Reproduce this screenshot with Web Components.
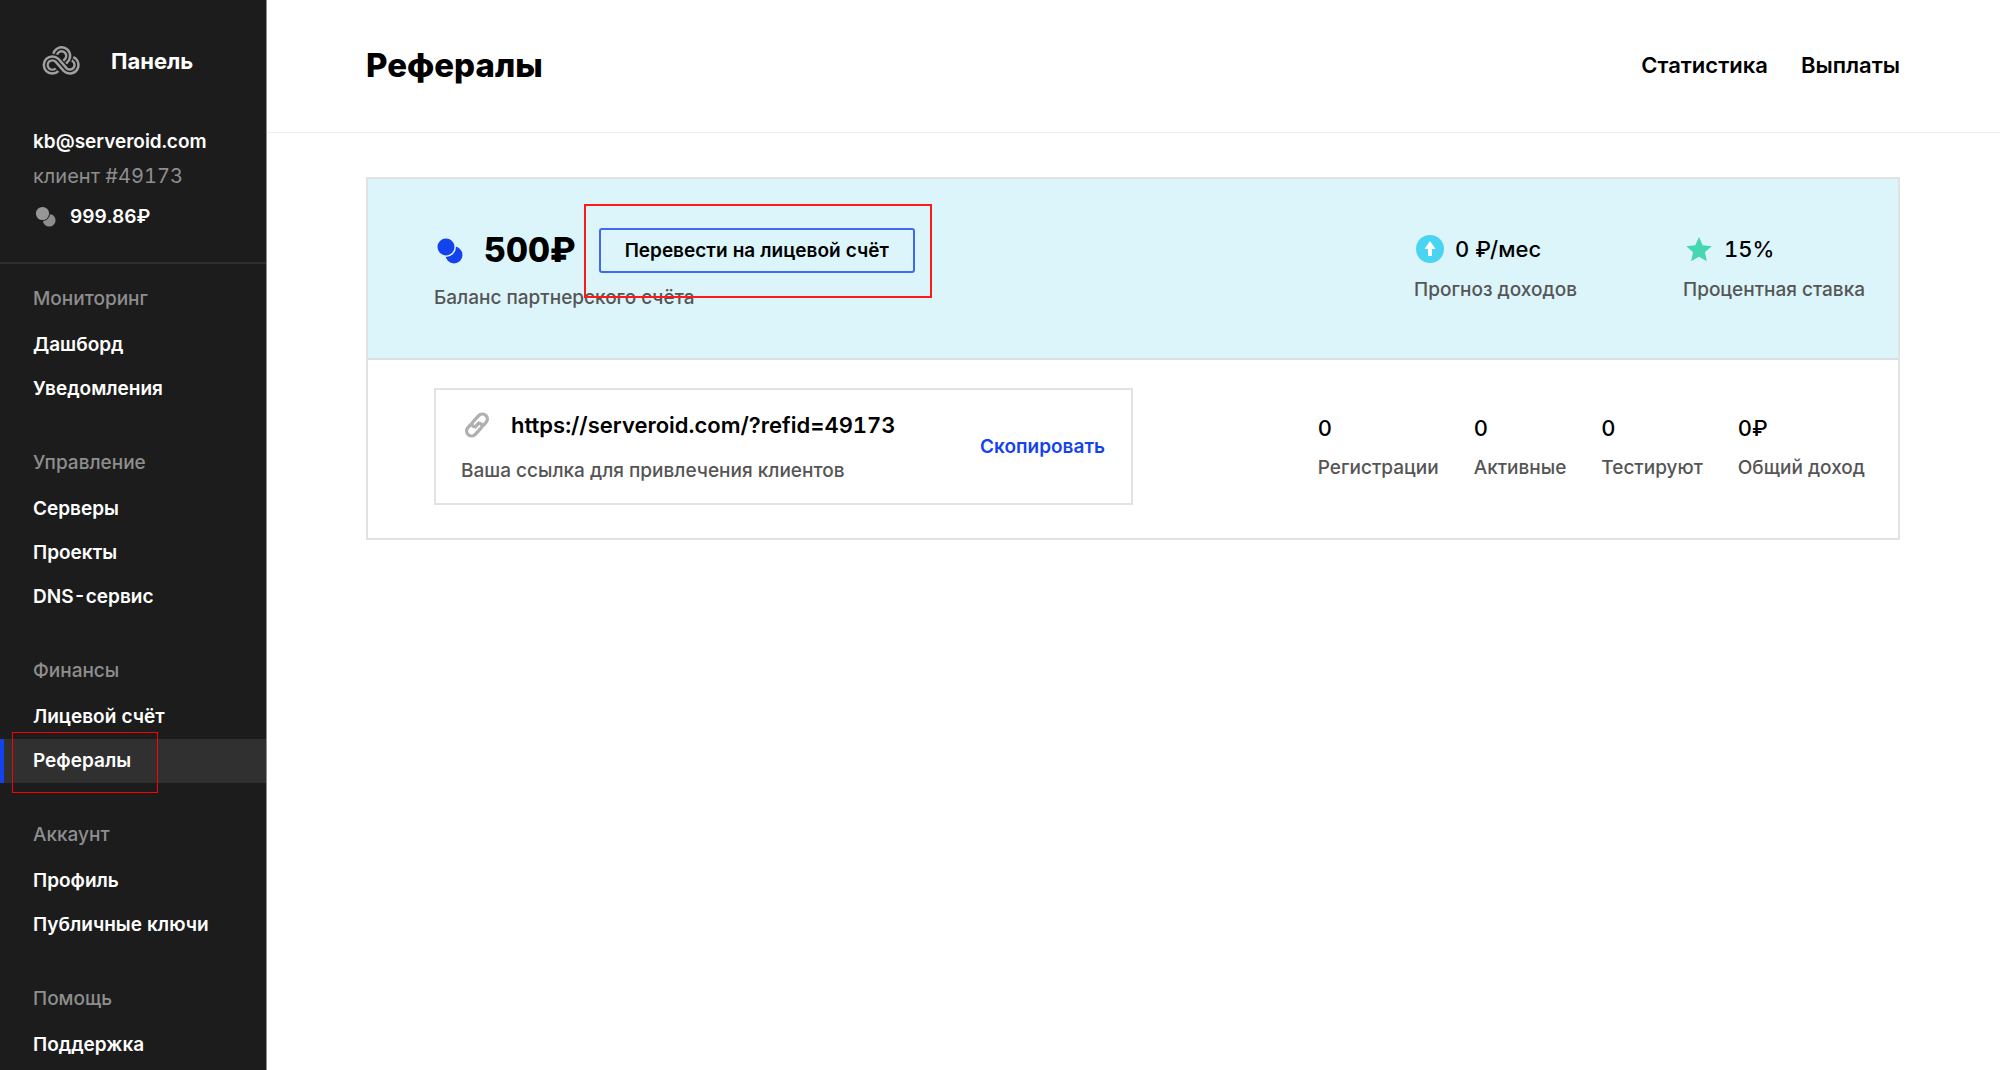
<!DOCTYPE html>
<html lang="ru">
<head>
<meta charset="utf-8">
<title>Рефералы</title>
<style>
html, body { margin: 0; height: 100%; }
body { font-family: Inter, sans-serif; font-size: 19px; line-height: 28px; color: #000; background: #fff; font-variant-numeric: tabular-nums; }
</style>
</head>
<body>
<panel-app></panel-app>

<template id="t-app">
<style>
:host { display: flex; height: 100vh; overflow: hidden; }
main { flex: 1; min-width: 0; }
.content { padding: 44px 100px 44px 99px; }
</style>
<side-bar></side-bar>
<main>
  <page-header heading="Рефералы">
    <header-link>Статистика</header-link>
    <header-link>Выплаты</header-link>
  </page-header>
  <div class="content"><referral-card></referral-card></div>
</main>
</template>

<template id="t-sidebar">
<style>
:host { display: block; flex: none; width: 266px; background: #1c1c1c; color: #fff; border-right: 1px solid #8e8e8e; }
.brand { display: flex; align-items: center; gap: 31px; padding: 46px 33px 0 42px; height: 29px; font-size: 22px; font-weight: 700; }
.brand svg { width: 38px; height: 30px; display: block; }
.user { padding: 50px 33px 28px; border-bottom: 2px solid #2f2f2f; font-weight: 600; }
.user p { margin: 0; line-height: 34px; }
.user .id { color: #8e8e8e; font-size: 20px; font-weight: 400; }
.user .money { display: flex; align-items: center; gap: 13px; padding-top: 7px; }
.money svg { width: 22px; height: 22px; margin-left: 2px; }
nav { padding-top: 13px; display: flex; flex-direction: column; gap: 30px; }
</style>
<div class="brand">
  <svg viewBox="0 0 38 30" fill="none">
    <path d="M13.200 8.200A6.600 6.600 0 1 1 25.400 13L22.500 16.500" stroke="#a0a0a0" stroke-width="6.400"/>
    <path d="M13.200 8.200A6.600 6.600 0 1 1 25.400 13L22.500 16.500" stroke="#1c1c1c" stroke-width="1.500"/>
    <path d="M15 14.300L23.300 23.700A6.600 6.600 0 0 0 28 25.600" stroke="#1c1c1c" stroke-width="8.800"/>
    <path d="M15 23.700A6.600 6.600 0 1 1 15 14.300L23.300 23.700A6.600 6.600 0 1 0 30.500 12.900" stroke="#a0a0a0" stroke-width="6.400"/>
    <path d="M15 23.700A6.600 6.600 0 1 1 15 14.300L23.300 23.700A6.600 6.600 0 1 0 30.500 12.900" stroke="#1c1c1c" stroke-width="1.500"/>
  </svg>
  <span>Панель</span>
</div>
<div class="user">
  <p>kb@serveroid.com</p>
  <p class="id">клиент #49173</p>
  <p class="money"><svg viewBox="0 0 22 22"><circle cx="14.200" cy="14.200" r="6.300" fill="#8e8e8e"/><circle cx="7.500" cy="7.500" r="7.600" fill="#1c1c1c"/><circle cx="7.500" cy="7.500" r="6.600" fill="#969696"/></svg><span>999.86₽</span></p>
</div>
<nav>
  <nav-group label="Мониторинг"><nav-item>Дашборд</nav-item><nav-item>Уведомления</nav-item></nav-group>
  <nav-group label="Управление"><nav-item>Серверы</nav-item><nav-item>Проекты</nav-item><nav-item>DNS-сервис</nav-item></nav-group>
  <nav-group label="Финансы"><nav-item>Лицевой счёт</nav-item><nav-item active>Рефералы</nav-item></nav-group>
  <nav-group label="Аккаунт"><nav-item>Профиль</nav-item><nav-item>Публичные ключи</nav-item></nav-group>
  <nav-group label="Помощь"><nav-item>Поддержка</nav-item></nav-group>
</nav>
</template>

<template id="t-group">
<style>
:host { display: block; }
.label { padding: 0 33px 2px; line-height: 44px; color: #8e8e8e; font-weight: 500; }
</style>
<div class="label"></div>
<slot></slot>
</template>

<template id="t-item">
<style>
:host { display: block; position: relative; }
a { display: block; padding: 0 33px; line-height: 44px; color: #fff; text-decoration: none; font-weight: 600; }
:host([active]) a { background: #303030; padding-left: 29px; border-left: 4px solid #1443ee; }
.mark { display: none; }
:host([active]) .mark { display: block; position: absolute; left: 12px; top: -7px; width: 144px; height: 59px; border: 1px solid #f00; pointer-events: none; }
</style>
<a href="#"><slot></slot></a>
<div class="mark"></div>
</template>

<template id="t-header">
<style>
:host { display: flex; align-items: center; justify-content: space-between; height: 133px; box-sizing: border-box; padding: 0 100px 0 99px; border-bottom: 1px solid #eee; }
h1 { margin: 0; padding-bottom: 2px; font-size: 33px; line-height: 44px; font-weight: 800; }
nav { display: flex; gap: 33px; }
</style>
<h1></h1>
<nav><slot></slot></nav>
</template>

<template id="t-hlink">
<style>
:host { display: block; }
a { color: #000; text-decoration: none; font-size: 22px; line-height: 28px; font-weight: 600; }
</style>
<a href="#"><slot></slot></a>
</template>

<template id="t-card">
<style>
:host { display: block; border: 2px solid #e2e2e2; }
.top, .bottom { display: flex; justify-content: space-between; padding: 0 33px 0 66px; }
.top { background: #dcf5fb; border-bottom: 2px solid #dcdfe0; height: 179px; align-items: flex-start; }
.balance { padding-top: 48px; }
.row { display: flex; align-items: center; height: 46px; }
.row svg { width: 30px; height: 30px; margin-right: 20px; }
.sum { font-size: 34px; font-weight: 800; margin-right: 23px; }
.action { position: relative; }
button { font: inherit; cursor: pointer; }
.transfer { display: block; box-sizing: border-box; height: 45px; padding: 1px 24px 0; background: transparent; border: 2px solid #4068f0; border-radius: 3px; color: #000; font-weight: 600; }
.mark { position: absolute; left: -15px; top: -24px; right: -17px; bottom: -25px; border: 2px solid #ff1a1a; pointer-events: none; }
.caption { color: #555; padding-top: 11px; font-weight: 500; }
.rates { display: flex; gap: 106px; padding-top: 55px; }
.bottom { align-items: flex-start; padding-top: 28px; padding-bottom: 33px; }
.stats { display: flex; gap: 35px; padding-top: 26px; }
.ref { display: flex; align-items: center; justify-content: space-between; box-sizing: border-box; flex: 0 0 699px; height: 117px; padding: 0 26px 0 25px; border: 2px solid #e2e2e2; }
.url { display: flex; align-items: center; gap: 18px; font-size: 22px; line-height: 28px; font-weight: 600; }
.url svg { width: 32px; height: 32px; }
.ref .caption { padding-top: 16px; }
.copy { border: 0; background: none; padding: 0; color: #1443ee; font-weight: 600; }
</style>
<div class="top">
  <div class="balance">
    <div class="row">
      <svg viewBox="0 0 30 30"><circle cx="20" cy="20" r="8.500" fill="#1443ee"/><circle cx="12" cy="12" r="10" fill="#dcf5fb"/><circle cx="12" cy="12" r="8.500" fill="#1443ee"/></svg>
      <span class="sum">500₽</span>
      <div class="action"><button class="transfer" type="button">Перевести на лицевой счёт</button><div class="mark"></div></div>
    </div>
    <div class="caption">Баланс партнерского счёта</div>
  </div>
  <div class="rates">
    <stat-item label="Прогноз доходов" icon><svg slot="icon" width="32" height="32" viewBox="0 0 32 32"><circle cx="16" cy="16" r="14" fill="#49d5f2"/><path d="M16 8l5.500 8H18v7h-4v-7h-3.500z" fill="#fff"/></svg>0 ₽/мес</stat-item>
    <stat-item label="Процентная ставка" icon><svg slot="icon" width="32" height="32" viewBox="0 0 32 32"><path d="M16 4l3.700 8.300 9 .9-6.800 6.100 2 8.900L16 23.700l-7.900 4.500 2-8.900-6.800-6.100 9-.9z" fill="#44d7b0"/></svg>15%</stat-item>
  </div>
</div>
<div class="bottom">
  <div class="ref">
    <div>
      <div class="url"><svg viewBox="-16 -16 32 32" fill="none" stroke="#b0b0b0" stroke-width="3.300"><g transform="rotate(-48)"><path d="M3 5H8A5 5 0 0 0 8-5H-1A2.500 2.500 0 0 0-1 0H4"/><path d="M-3-5H-8A5 5 0 0 0-8 5H1A2.500 2.500 0 0 0 1 0H-4"/></g></svg><span>https://serveroid.com/?refid=49173</span></div>
      <div class="caption">Ваша ссылка для привлечения клиентов</div>
    </div>
    <button class="copy" type="button">Скопировать</button>
  </div>
  <div class="stats">
    <stat-item label="Регистрации">0</stat-item>
    <stat-item label="Активные">0</stat-item>
    <stat-item label="Тестируют">0</stat-item>
    <stat-item label="Общий доход">0₽</stat-item>
  </div>
</div>
</template>

<template id="t-stat">
<style>
:host { display: block; }
.value { display: flex; align-items: center; gap: 9px; height: 28px; font-size: 22px; line-height: 28px; font-weight: 500; }
:host([icon]) .value { height: 30px; }
.label { color: #555; padding-top: 12px; font-weight: 500; }
</style>
<div class="value"><slot name="icon"></slot><span><slot></slot></span></div>
<div class="label"></div>
</template>

<script>
class PanelElement extends HTMLElement {
  constructor() {
    super();
    this.attachShadow({ mode: "open" })
      .append(document.getElementById(this.constructor.template).content.cloneNode(true));
  }
}
const define = (name, template, fill) => customElements.define(name, class extends PanelElement {
  static template = template;
  connectedCallback() { if (fill) fill(this, this.shadowRoot); }
});
define("header-link", "t-hlink");
define("nav-item", "t-item");
define("nav-group", "t-group", (el, root) => { root.querySelector(".label").textContent = el.getAttribute("label"); });
define("stat-item", "t-stat", (el, root) => { root.querySelector(".label").textContent = el.getAttribute("label"); });
define("page-header", "t-header", (el, root) => { root.querySelector("h1").textContent = el.getAttribute("heading"); });
define("referral-card", "t-card");
define("side-bar", "t-sidebar");
define("panel-app", "t-app");
</script>
</body>
</html>
